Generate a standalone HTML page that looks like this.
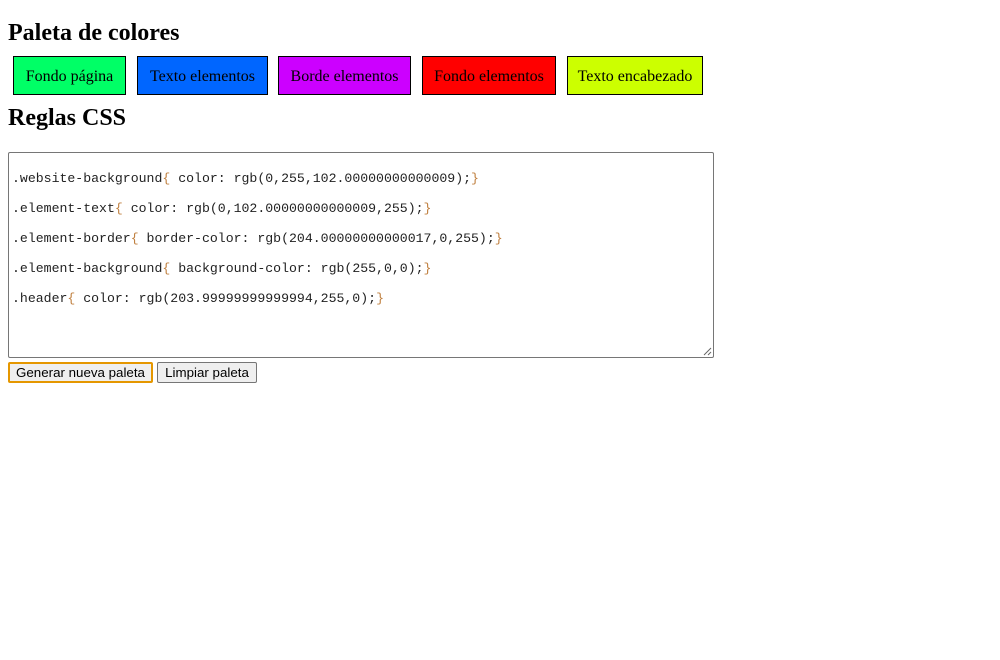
<!DOCTYPE html>
<html><head><meta charset="utf-8"><style>
body{margin:0;background:#fff;font-family:"Liberation Serif",serif;}
h2{position:absolute;left:8px;margin:0;font-size:24px;font-weight:bold;line-height:28px;}
.box{position:absolute;top:56px;height:37px;border:1px solid #000;font-size:16px;line-height:39px;text-align:center;box-sizing:content-box;}
.ta{position:absolute;left:8px;top:152px;width:706px;height:206px;border:1px solid #767676;border-radius:2px;box-sizing:border-box;}
.ln{position:absolute;left:3px;font-family:"Liberation Mono",monospace;font-size:13.2px;color:#222;white-space:pre;line-height:16px;}
.b{color:#c08040}
.btn{position:absolute;top:362px;height:21px;box-sizing:border-box;border:1px solid #767676;border-radius:2px;background:#efefef;font-family:"Liberation Sans",sans-serif;font-size:13.33px;line-height:20px;text-align:center;}
</style></head><body>
<h2 style="top:19px">Paleta de colores</h2>
<div class="box" style="left:13px;width:111px;background:#00ff66">Fondo página</div>
<div class="box" style="left:137px;width:129px;background:#0066ff">Texto elementos</div>
<div class="box" style="left:278px;width:131px;background:#cc00ff">Borde elementos</div>
<div class="box" style="left:422px;width:132px;background:#ff0000">Fondo elementos</div>
<div class="box" style="left:567px;width:134px;background:#ccff00">Texto encabezado</div>
<h2 style="top:104px">Reglas CSS</h2>
<div class="ta">
<div class="ln" style="top:18px">.website-background<span class="b">{</span> color: rgb(0,255,102.00000000000009);<span class="b">}</span></div>
<div class="ln" style="top:48px">.element-text<span class="b">{</span> color: rgb(0,102.00000000000009,255);<span class="b">}</span></div>
<div class="ln" style="top:78px">.element-border<span class="b">{</span> border-color: rgb(204.00000000000017,0,255);<span class="b">}</span></div>
<div class="ln" style="top:108px">.element-background<span class="b">{</span> background-color: rgb(255,0,0);<span class="b">}</span></div>
<div class="ln" style="top:138px">.header<span class="b">{</span> color: rgb(203.99999999999994,255,0);<span class="b">}</span></div>
<svg style="position:absolute;right:1px;bottom:1px" width="9" height="9"><path d="M8 1L1 8M8 5L5 8" stroke="#666" stroke-width="1"/></svg>
</div>
<div class="btn" style="left:8px;width:145px;border:2px solid #e59700;line-height:18px">Generar nueva paleta</div>
<div class="btn" style="left:157px;width:100px">Limpiar paleta</div>
</body></html>
